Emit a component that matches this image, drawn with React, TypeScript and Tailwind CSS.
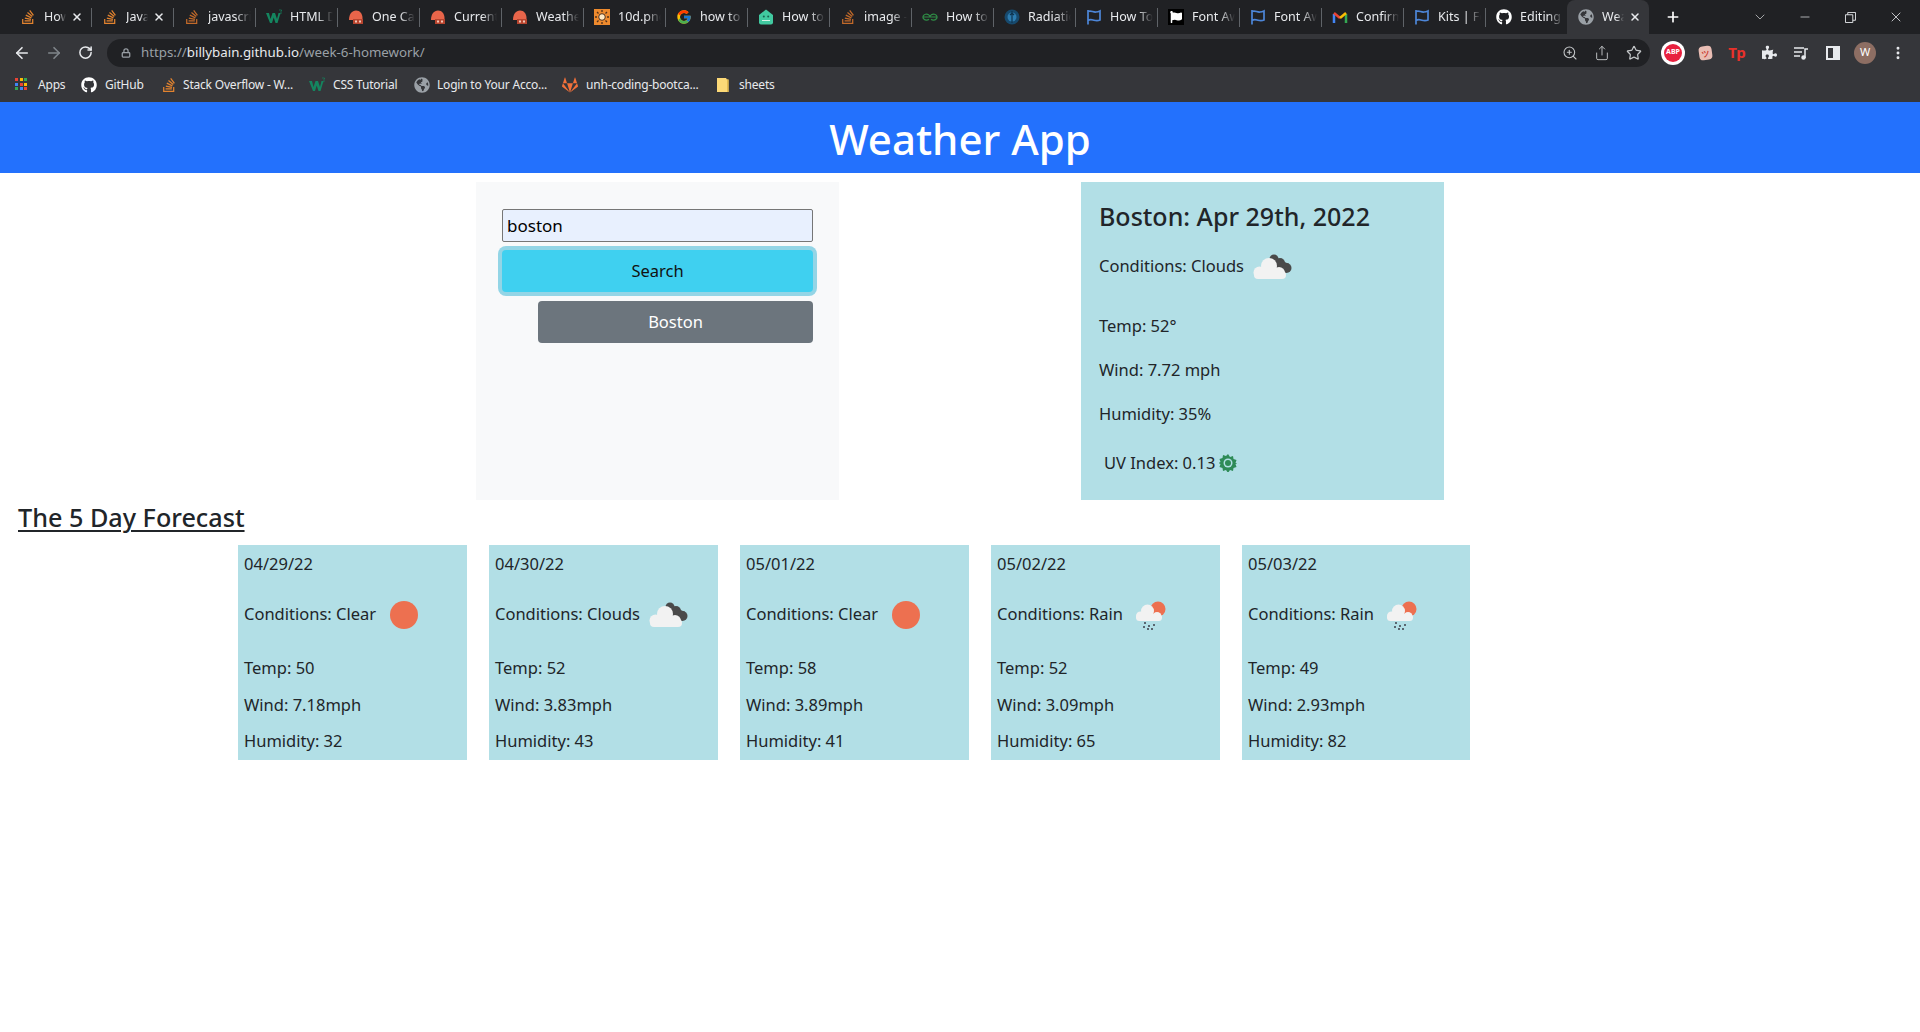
import { ChevronDown, Lock, Minus, MoreVertical, Plus, RotateCw, Star, X, ZoomIn, ArrowLeft, ArrowRight, Share } from 'lucide-react';
import { FaFlag, FaGithub, FaGitlab, FaGlobeAmericas, FaPuzzlePiece, FaStackOverflow } from 'react-icons/fa';
import { FcGoogle } from 'react-icons/fc';

function W3Icon() {
  return (
    <svg viewBox="0 0 16 16" className="h-4 w-4">
      <path d="M0 4h3l1.500 6L6.500 4h2.500l2 6L12.500 4H14.500L11.500 14H9.500L7.700 8.500 6 14H4z" fill="#14855f" />
      <path d="M13 1h2.500v1l-1 1 1 1-1 1h-1.500" fill="none" stroke="#14855f" strokeWidth="0.700" />
    </svg>
  );
}

function HelmetIcon() {
  return (
    <svg viewBox="0 0 16 16" className="h-4 w-4">
      <path d="M1 11C1 5 4 1.500 8 1.500S14.500 5 14.500 9v2z" fill="#e8654a" />
      <path d="M5 10h10v5H5z" fill="#b8452f" />
      <path d="M7 11.500h2v2H7zM11 11.500h2v2h-2z" fill="#f3c8b8" />
    </svg>
  );
}

function SunSquareIcon() {
  return (
    <svg viewBox="0 0 16 16" className="h-4 w-4">
      <rect width="16" height="16" fill="#ee8a2d" />
      <circle cx="8" cy="8" r="3.300" fill="#ffe9c4" stroke="#50301a" strokeWidth="1" />
      <path d="M8 1v2M8 13v2M1 8h2M13 8h2M3 3l1.500 1.500M11.500 11.500 13 13M13 3l-1.500 1.500M4.500 11.500 3 13" stroke="#50301a" strokeWidth="1.300" />
    </svg>
  );
}

function RobotIcon() {
  return (
    <svg viewBox="0 0 16 16" className="h-4 w-4">
      <path d="M8 0.500 15 6v7.500a2 2 0 0 1-2 2H3a2 2 0 0 1-2-2V6z" fill="#41c9a0" />
      <circle cx="5.800" cy="7.500" r="1" fill="#17634f" />
      <circle cx="10.200" cy="7.500" r="1" fill="#17634f" />
      <path d="M4 11.500h8" stroke="#d4f3e7" strokeWidth="1" />
    </svg>
  );
}

function GeeksIcon() {
  return (
    <svg viewBox="0 0 16 16" className="h-4 w-4" fill="none" stroke="#2f8d46" strokeWidth="1.200">
      <path d="M8 8a3.500 3 0 1 0-1 2.200M8 8a3.500 3 0 1 1 1 2.200M1 8h14" />
    </svg>
  );
}

function RadiationIcon() {
  return (
    <svg viewBox="0 0 16 16" className="h-4 w-4">
      <circle cx="8" cy="8" r="7.500" fill="#174a6e" />
      <circle cx="8" cy="8" r="4.500" fill="#2d7cb0" />
      <path d="M8 2v12M6 6l2-2 2 2" stroke="#0f3550" strokeWidth="1.200" fill="none" />
    </svg>
  );
}

function BlueFlagIcon() {
  return (
    <svg viewBox="0 0 16 16" className="h-4 w-4" fill="none" stroke="#4d86d8" strokeWidth="1.700">
      <path d="M2 1v14.500M2 2.500c3-1.500 5 1 8 0.500 1.500 0 3-.5 4-1v9c-3 1.500-5 .5-7 0-2-.5-3.500-.5-5 .5" />
    </svg>
  );
}

function BlackFlagIcon() {
  return (
    <div className="flex h-4 w-4 items-center justify-center bg-black">
      <FaFlag className="h-3 w-3 text-white" />
    </div>
  );
}

function GmailIcon() {
  return (
    <svg viewBox="0 0 16 16" className="h-4 w-4" fill="none" strokeWidth="2.500">
      <path d="M2 14V5" stroke="#4285f4" />
      <path d="M14 14V5" stroke="#34a853" />
      <path d="M2 4l6 5" stroke="#ea4335" />
      <path d="M8 9l6-5" stroke="#fbbc04" />
    </svg>
  );
}

type Tab = {
  title: string;
  icon: React.ReactNode;
  close?: boolean;
  active?: boolean;
};

const so = <FaStackOverflow className="h-4 w-4 text-[#e2832f]" />;
const soDim = <FaStackOverflow className="h-4 w-4 text-[#c26a2a]" />;
const helmet = <HelmetIcon />;

const tabs: Tab[] = [
  { title: 'How to', icon: so, close: true },
  { title: 'JavaScript', icon: so, close: true },
  { title: 'javascript', icon: soDim },
  { title: 'HTML Dom', icon: <W3Icon /> },
  { title: 'One Call', icon: helmet },
  { title: 'Current', icon: helmet },
  { title: 'Weather', icon: helmet },
  { title: '10d.png', icon: <SunSquareIcon /> },
  { title: 'how to change', icon: <FcGoogle className="h-4 w-4" /> },
  { title: 'How to', icon: <RobotIcon /> },
  { title: 'image - Stack', icon: soDim },
  { title: 'How to', icon: <GeeksIcon /> },
  { title: 'Radiation', icon: <RadiationIcon /> },
  { title: 'How To', icon: <BlueFlagIcon /> },
  { title: 'Font Awesome', icon: <BlackFlagIcon /> },
  { title: 'Font Awesome', icon: <BlueFlagIcon /> },
  { title: 'Confirm', icon: <GmailIcon /> },
  { title: 'Kits | Font', icon: <BlueFlagIcon /> },
  { title: 'Editing week', icon: <FaGithub className="h-4 w-4 text-white" /> },
  { title: 'Weather', icon: <FaGlobeAmericas className="h-4 w-4 text-[#9aa0a6]" />, close: true, active: true },
];

function TabItem({ tab, index }: { tab: Tab; index: number }) {
  return (
    <div className={`relative flex h-[34px] w-[82px] shrink-0 items-center pl-[11px] ${tab.active ? 'rounded-t-lg bg-[#35363a]' : ''}`}>
      {index > 0 && !tab.active && <div className="absolute top-[8px] left-0 h-[19px] w-px bg-[#5f6368]" />}
      <div className="flex w-4 shrink-0 justify-center">{tab.icon}</div>
      <span className={`ml-[8px] overflow-hidden text-[12.500px] whitespace-nowrap text-[#e8eaed] [mask-image:linear-gradient(to_right,black_65%,transparent)] ${tab.close ? 'w-[22px]' : 'w-[43px]'}`}>
        {tab.title}
      </span>
      {tab.close && <X className="ml-[5px] h-3 w-3 shrink-0 text-[#e8eaed]" strokeWidth={3} />}
    </div>
  );
}

function TabStrip() {
  return (
    <div className="flex h-[34px] items-center bg-[#202124] pl-[9px]">
      {tabs.map((tab, i) => (
        <TabItem key={i} tab={tab} index={i} />
      ))}
      <Plus className="ml-[16px] h-4 w-4 text-white" strokeWidth={2.5} />
      <ChevronDown className="ml-[71px] h-4 w-4 text-[#c4c7c9]" strokeWidth={1.2} />
      <Minus className="ml-[30px] h-[14px] w-[14px] text-[#e8eaed]" strokeWidth={1.2} />
      <svg viewBox="0 0 12 12" className="ml-[33px] h-[11px] w-[11px]" fill="none" stroke="#e8eaed" strokeWidth="1">
        <path d="M0.500 3h8v8.500h-8zM3 3V0.500h8.500V9H8.500" />
      </svg>
      <X className="ml-[32px] h-4 w-4 text-[#e8eaed]" strokeWidth={1.2} />
    </div>
  );
}

function ToolBar() {
  return (
    <div className="flex h-[36px] items-center bg-[#35363a] pt-[1px]">
      <ArrowLeft className="ml-[13px] h-[18px] w-[18px] text-[#e8eaed]" strokeWidth={2.2} />
      <ArrowRight className="ml-[14px] h-[18px] w-[18px] text-[#80868b]" strokeWidth={2.2} />
      <RotateCw className="ml-[15px] h-[15px] w-[15px] text-[#e8eaed]" strokeWidth={2.4} />
      <div className="ml-[14px] flex h-[28px] w-[1543px] shrink-0 items-center rounded-full bg-[#202124] pl-[14px]">
        <Lock className="h-[10px] w-[10px] text-[#9aa0a6]" strokeWidth={3} />
        <span className="ml-[10px] text-[13.300px] text-[#9aa0a6]">
          https://<span className="text-[#e8eaed]">billybain.github.io</span>/week-6-homework/
        </span>
        <div className="ml-auto flex items-center gap-[16px] pr-[8px] text-[#c4c7c9]">
          <ZoomIn className="h-4 w-4" strokeWidth={1.6} />
          <Share className="h-4 w-4" strokeWidth={1.4} />
          <Star className="h-4 w-4" strokeWidth={1.8} />
        </div>
      </div>
      <div className="ml-[7px] flex">
        <div className="flex w-[32px] justify-center">
          <div className="flex h-[24px] w-[24px] items-center justify-center rounded-full bg-white">
            <div className="flex h-[18px] w-[18px] items-center justify-center rounded-full bg-[#e8213f] text-[7px] font-bold text-white">ABP</div>
          </div>
        </div>
        <div className="flex w-[32px] items-center justify-center">
          <div className="flex h-[14px] w-[13px] rotate-[-8deg] items-center justify-center rounded-sm bg-[#e9bdb4] text-[8px] font-bold text-[#c8322a]">ツ</div>
        </div>
        <div className="flex w-[32px] items-center justify-center text-[15px] font-bold text-[#e8312a]">Tp</div>
        <div className="flex w-[32px] items-center justify-center">
          <FaPuzzlePiece className="h-[15px] w-[15px] text-[#e8eaed]" />
        </div>
        <div className="flex w-[32px] items-center justify-center">
          <svg viewBox="0 0 16 16" className="h-4 w-4" fill="none" stroke="#e8eaed" strokeWidth="1.500">
            <path d="M1 3h10M1 7h8M1 11h6M12 13V4h3" />
            <circle cx="10.500" cy="12.500" r="1.500" fill="#e8eaed" />
          </svg>
        </div>
        <div className="flex w-[32px] items-center justify-center">
          <div className="flex h-[14px] w-[14px] justify-end border-2 border-[#e8eaed]">
            <div className="h-full w-[5px] bg-[#e8eaed]" />
          </div>
        </div>
        <div className="flex w-[32px] items-center justify-center">
          <div className="flex h-[22px] w-[22px] items-center justify-center rounded-full bg-[#8d6e63] text-[11px] text-white">W</div>
        </div>
        <div className="flex w-[33px] items-center justify-center">
          <MoreVertical className="h-4 w-4 text-[#e8eaed]" strokeWidth={2.4} />
        </div>
      </div>
    </div>
  );
}

function AppsIcon() {
  const colors = ['#ea4335', '#fbbc04', '#34a853', '#4285f4', '#ea4335', '#fbbc04', '#34a853', '#4285f4', '#ea4335'];
  return (
    <div className="grid h-[13px] w-[13px] grid-cols-3 gap-[1px]">
      {colors.map((c, i) => (
        <svg key={i} viewBox="0 0 3 3" className="h-[3px] w-[3px]">
          <rect width="3" height="3" fill={c} />
        </svg>
      ))}
    </div>
  );
}

function FolderIcon() {
  return (
    <svg viewBox="0 0 12 14" className="h-[14px] w-[12px]">
      <path d="M0 0h9l1 1.500h1.500V14H0z" fill="#fcd977" />
      <path d="M10 1.500h1.500V14H10z" fill="#e3b94f" />
    </svg>
  );
}

const bookmarks = [
  { label: 'Apps', width: 'w-[66px]', pad: 'ml-[10px]', icon: <AppsIcon /> },
  { label: 'GitHub', width: 'w-[80px]', pad: 'ml-[8px]', icon: <FaGithub className="h-4 w-4 text-white" /> },
  { label: 'Stack Overflow - W...', width: 'w-[148px]', pad: 'ml-[6px]', icon: <FaStackOverflow className="h-4 w-4 text-[#e2832f]" /> },
  { label: 'CSS Tutorial', width: 'w-[105px]', pad: 'ml-[8px]', icon: <W3Icon /> },
  { label: 'Login to Your Acco...', width: 'w-[148px]', pad: 'ml-[7px]', icon: <FaGlobeAmericas className="h-4 w-4 text-[#9aa0a6]" /> },
  { label: 'unh-coding-bootca...', width: 'w-[155px]', pad: 'ml-[8px]', icon: <FaGitlab className="h-4 w-4 text-[#f2703a]" /> },
  { label: 'sheets', width: 'w-[70px]', pad: 'ml-[10px]', icon: <FolderIcon /> },
];

function BookmarkBar() {
  return (
    <div className="flex h-[32px] items-center bg-[#35363a] pb-[3px] pl-[15px]">
      {bookmarks.map((b) => (
        <div key={b.label} className={`flex items-center ${b.width}`}>
          {b.icon}
          <span className={`text-xs tracking-[-0.2px] whitespace-nowrap text-[#e8eaed] ${b.pad}`}>{b.label}</span>
        </div>
      ))}
    </div>
  );
}

function SunImage() {
  return (
    <svg viewBox="0 0 50 50" className="h-[50px] w-[50px] shrink-0">
      <circle cx="25" cy="26" r="14" fill="#ed7050" />
    </svg>
  );
}

function CloudsImage() {
  return (
    <svg viewBox="0 0 50 50" className="h-[50px] w-[50px] shrink-0">
      <g fill="#4a4a4a">
        <circle cx="27" cy="18" r="4.500" />
        <circle cx="33" cy="22" r="5" />
        <circle cx="39.500" cy="27" r="5" />
        <path d="M25 15l17 8-3 9-14-8z" />
      </g>
      <g fill="#f2f2f2">
        <circle cx="12.500" cy="31.500" r="6" />
        <circle cx="22" cy="25" r="8" />
        <circle cx="32" cy="32" r="6" />
        <rect x="7" y="30" width="32" height="8" rx="4" />
      </g>
    </svg>
  );
}

function RainImage() {
  return (
    <svg viewBox="0 0 50 50" className="h-[50px] w-[50px] shrink-0">
      <circle cx="32" cy="20" r="7.500" fill="#ed7050" />
      <g fill="#f2f2f2">
        <circle cx="14.500" cy="27" r="4.500" />
        <circle cx="21.500" cy="22" r="6.500" />
        <circle cx="31" cy="27.500" r="4.500" />
        <rect x="10" y="25" width="26" height="7" rx="3.500" />
      </g>
      <g fill="#5a6670">
        <rect x="18" y="33" width="2" height="2" />
        <rect x="17" y="37" width="2" height="2" />
        <rect x="22" y="36" width="2" height="2" />
        <rect x="27" y="35" width="2" height="2" />
        <rect x="21" y="39" width="2" height="2" />
        <rect x="25" y="39" width="2" height="2" />
      </g>
    </svg>
  );
}

function UvIcon() {
  return (
    <svg viewBox="0 0 18 18" className="ml-[4px] h-[18px] w-[18px]">
      <path d="M9 0l2 3 3-1 .500 3 3 1-1 3 2 0-2 1 1 3-3 1-.500 3-3-1-2 3-2-3-3 1-.500-3-3-1 1-3-2-1 2-1-1-3 3-1 .500-3 3 1z" fill="#2e8b57" />
      <circle cx="9" cy="9" r="4.500" fill="#b2dfe6" />
      <circle cx="9" cy="9" r="3" fill="#2e8b57" />
    </svg>
  );
}

type Day = {
  date: string;
  conditions: string;
  image: React.ReactNode;
  temp: number;
  wind: string;
  humidity: number;
};

const days: Day[] = [
  { date: '04/29/22', conditions: 'Clear', image: <SunImage />, temp: 50, wind: '7.18', humidity: 32 },
  { date: '04/30/22', conditions: 'Clouds', image: <CloudsImage />, temp: 52, wind: '3.83', humidity: 43 },
  { date: '05/01/22', conditions: 'Clear', image: <SunImage />, temp: 58, wind: '3.89', humidity: 41 },
  { date: '05/02/22', conditions: 'Rain', image: <RainImage />, temp: 52, wind: '3.09', humidity: 65 },
  { date: '05/03/22', conditions: 'Rain', image: <RainImage />, temp: 49, wind: '2.93', humidity: 82 },
];

function DayCard({ day }: { day: Day }) {
  return (
    <div className="h-[215px] w-[229px] bg-[#b2dfe6] px-[6px] pt-[7px] text-[#212529] last:w-[228px]">
      <p className="mb-[13px] leading-6">{day.date}</p>
      <div className="mb-[17px] flex h-[50px] items-center">
        <span>Conditions: {day.conditions}</span>
        <div className="ml-[3px]">{day.image}</div>
      </div>
      <p className="mb-[13px] leading-6">Temp: {day.temp}</p>
      <p className="mb-[12px] leading-6">Wind: {day.wind}mph</p>
      <p className="leading-6">Humidity: {day.humidity}</p>
    </div>
  );
}

export default function App() {
  return (
    <div className="min-h-screen overflow-hidden bg-white font-['Noto_Sans',sans-serif] text-[16.500px] text-[#212529]">
      <TabStrip />
      <ToolBar />
      <BookmarkBar />
      <header className="flex h-[71px] items-center justify-center bg-[#2371fd] pt-[2px]">
        <h1 className="text-[42px] font-medium text-white">Weather App</h1>
      </header>

      <main>
        <div className="mt-[9px] flex justify-center gap-[242px]">
          <section className="h-[318px] w-[363px] bg-[#f8f9fa] pt-[27px] pl-[26px]">
            <input
              readOnly
              value="boston"
              className="block h-[33px] w-[311px] rounded-[2px] border border-[#767676] bg-[#e8f0fe] px-[4px] text-[17px] text-black"
            />
            <button className="mt-[8px] block h-[42px] w-[311px] rounded-[4px] bg-[#3fd0f0] text-center text-[#111] shadow-[0_0_0_4px_#93d5e6]">
              Search
            </button>
            <button className="mt-[9px] ml-[36px] block h-[42px] w-[275px] rounded-[4px] bg-[#6c757d] text-center text-white">
              Boston
            </button>
          </section>

          <section className="h-[318px] w-[363px] bg-[#b2dfe6] pt-[20px] pl-[18px]">
            <h3 className="text-[25px] leading-[29px] font-medium">Boston: Apr 29th, 2022</h3>
            <div className="mt-[10px] flex h-[50px] items-center">
              <span>Conditions: Clouds</span>
              <div className="ml-[3px]">
                <CloudsImage />
              </div>
            </div>
            <p className="mt-[23px] leading-6">Temp: 52°</p>
            <p className="mt-[20px] leading-6">Wind: 7.72 mph</p>
            <p className="mt-[20px] leading-6">Humidity: 35%</p>
            <div className="mt-[25px] ml-[5px] flex h-6 items-center">
              <span>UV Index: 0.13</span>
              <UvIcon />
            </div>
          </section>
        </div>

        <h2 className="mt-[1px] ml-[18px] text-[25.200px] leading-[32px] font-medium underline decoration-2 underline-offset-[3px]">
          The 5 Day Forecast
        </h2>

        <div className="mt-[12px] ml-[238px] flex gap-[22px]">
          {days.map((day) => (
            <DayCard key={day.date} day={day} />
          ))}
        </div>
      </main>
    </div>
  );
}
